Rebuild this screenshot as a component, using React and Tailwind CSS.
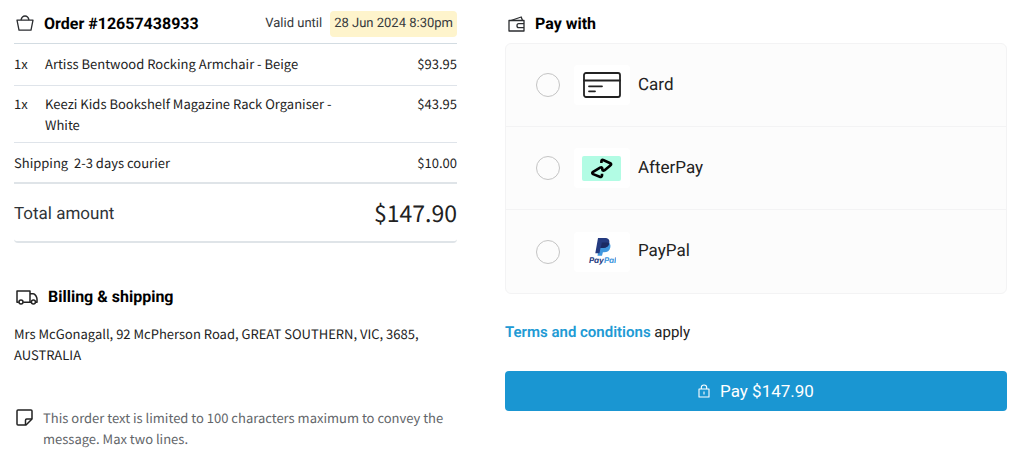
import React, { useState } from 'react';

const BasketIcon = () => (
    <svg width="18" height="17" viewBox="0 0 18 17" fill="none" stroke="#2b2d30" strokeWidth="1.3" strokeLinejoin="round" aria-hidden="true">
        <path d="M1 5.2h16l-2 9.9H3z" />
        <path d="M5 5C5.6 2.4 7 1 9 1s3.4 1.4 4 4" />
    </svg>
);

const WalletIcon = () => (
    <svg width="17" height="16" viewBox="0 0 17 16" fill="none" stroke="#2b2d30" strokeWidth="1.3" strokeLinejoin="round" aria-hidden="true">
        <path d="M1 4.5h15V15H1z" />
        <path d="M3 4.5L13.2 1l1.3 3.5" />
        <path d="M16 7.7h-5.2q-1.8 0-1.8 2t1.8 2H16" />
    </svg>
);

const TruckIcon = () => (
    <svg width="22" height="15" viewBox="0 0 22 15" fill="none" stroke="#222" strokeWidth="1.5" strokeLinejoin="round" aria-hidden="true">
        <path d="M2.8 12.2H1V1h13v11.2H7.2" />
        <path d="M14 3.7h3.2c2 0 3.8 3.7 3.8 5.3v3.2h-1.5M15.2 12.2H14" />
        <circle cx="5" cy="12" r="2" />
        <circle cx="17.4" cy="12" r="2" />
    </svg>
);

const NoteIcon = () => (
    <svg width="17" height="17" viewBox="0 0 17 17" fill="none" stroke="#222" strokeWidth="1.5" strokeLinejoin="round" aria-hidden="true">
        <path d="M2 1h13q1 0 1 1v8l-6 6H2q-1 0-1-1V2q0-1 1-1z" />
        <path d="M9.5 16v-4.8q0-1.2 1.2-1.2H16" />
    </svg>
);

const LockIcon = () => (
    <svg width="12" height="14" viewBox="0 0 12 14" fill="none" stroke="#fff" strokeWidth="1.1" strokeLinejoin="round" aria-hidden="true">
        <path d="M1 5h10v8H1zM3.3 5V3.5C3.3 2 4.4 1 6 1s2.7 1 2.7 2.5V5M6 7.5v3" />
    </svg>
);

const CardLogo = () => (
    <svg width="38" height="26" viewBox="0 0 38 26" fill="none" stroke="#222" strokeWidth="1.8" strokeLinecap="round" aria-hidden="true">
        <rect x="1" y="1" width="36" height="24" rx="2" />
        <path d="M1 8.5h36M6 14.3h13M6 19.3h6" />
    </svg>
);

const AfterPayLogo = () => (
    <svg width="39" height="25" viewBox="0 0 39 25" fill="none" aria-hidden="true">
        <rect width="39" height="25" rx="2" fill="#b2fce4" />
        <path
            d="M19.4 7V5.3q.3-2 2.3-1.1l6.6 3q1.7 1 0 2.200l-5.700 4.800q-1.900 1.200-2.300-.8v-.9q-.3-1.900-2.200-.8l-7 4.200q-1.700 1.200 0 2.200l6.600 2.600q1.900.8 2.300-1v-1.900"
            stroke="#000"
            strokeWidth="2.6"
            strokeLinejoin="round"
        />
    </svg>
);

const PayPalLogo = () => (
    <svg width="28" height="30" viewBox="0 0 28 30" aria-hidden="true">
        <path d="M11.5 5.5h7.2c3.3 0 4.2 2.3 3.6 5-.7 3.3-3 4.8-6.2 4.8h-1.2l-.9 3.4H9.5z" fill="#4097de" />
        <path d="M10 1h6.700c3.600 0 5.200 1.800 4.600 5-.6 3.500-3 5-6.200 5h-2.600l-1 5.200H7.300z" fill="#253b80" />
        <path d="M13.8 5.500h5c1 0 1.900.2 2.500.6-.5 3.400-2.900 4.900-6.200 4.900h-2.400z" fill="#1b2a63" />
        <text x="1" y="26" fontFamily="Inter, sans-serif" fontSize="8" fontWeight="700" fontStyle="italic" fill="#253b80">
            Pay<tspan fill="#4097de">Pal</tspan>
        </text>
    </svg>
);

const items = [
    { qty: 1, name: 'Artiss Bentwood Rocking Armchair - Beige', price: '$93.95' },
    { qty: 1, name: 'Keezi Kids Bookshelf Magazine Rack Organiser - White', price: '$43.95' },
];

const methods = [
    { id: 'card', label: 'Card', Logo: CardLogo },
    { id: 'afterpay', label: 'AfterPay', Logo: AfterPayLogo },
    { id: 'paypal', label: 'PayPal', Logo: PayPalLogo },
];

const OrderSummary = () => (
    <section>
        <div className="flex h-11 items-center border-b border-[#d3dce2] pt-1 pl-0.5">
            <BasketIcon />
            <h2 className="ml-2.5 font-['Roboto',sans-serif] text-base font-bold text-black">Order #12657438933</h2>
            <div className="ml-auto flex items-center gap-2 font-['Roboto',sans-serif] text-[13px] text-[#36393c]">
                <span>Valid until</span>
                <time className="rounded bg-[#fef4cc] px-1 py-0.5 leading-[22px]">28 Jun 2024 8:30pm</time>
            </div>
        </div>

        <table className="w-full">
            <tbody className="[&>tr:first-child>td]:pt-[9px]">
                {items.map((item) => (
                    <tr key={item.name} className="h-[41px] border-b border-[#dfe4ea] align-top">
                        <td className="w-[31px] py-[7px]">{item.qty}x</td>
                        <td className="py-[7px] pr-16">{item.name}</td>
                        <td className="py-[7px] text-right">{item.price}</td>
                    </tr>
                ))}
                <tr className="h-[41px] border-b-2 border-[#dfe4e8]">
                    <td colSpan={2}>Shipping&nbsp; 2-3 days courier</td>
                    <td className="text-right">$10.00</td>
                </tr>
            </tbody>
        </table>

        <div className="flex h-[59px] items-center justify-between rounded-b border-b-2 border-[#dfe4e8]">
            <span className="pt-1 font-['Roboto',sans-serif] text-[17px] text-[#2f3337]">Total amount</span>
            <span className="text-[23px]">$147.90</span>
        </div>
    </section>
);

const Shipping = () => (
    <section className="mt-10">
        <div className="flex h-7 items-center gap-2.5 pl-0.5">
            <TruckIcon />
            <h2 className="font-['Roboto',sans-serif] text-base font-bold text-black">Billing &amp; shipping</h2>
        </div>
        <address className="mt-3 not-italic">
            Mrs McGonagall, 92 McPherson Road, GREAT SOUTHERN, VIC, 3685, AUSTRALIA
        </address>
        <div className="mt-[42px] flex gap-2.5 text-[#626569]">
            <span className="shrink-0 pt-0.5 pl-0.5"><NoteIcon /></span>
            <p>This order text is limited to 100 characters maximum to convey the message. Max two lines.</p>
        </div>
    </section>
);

const Payment = () => {
    const [method, setMethod] = useState(null);

    return (
        <section className="font-['Roboto',sans-serif] text-[#222]">
            <div className="flex h-[43px] items-center gap-2.5 pt-1 pl-[3px]">
                <WalletIcon />
                <h2 className="text-base font-bold text-black">Pay with</h2>
            </div>

            <div className="divide-y divide-[#f3f3f4] rounded-md border border-[#f3f3f4] bg-[#fcfcfc]">
                {methods.map(({ id, label, Logo }) => (
                    <label key={id} htmlFor={id} className="flex h-[83px] cursor-pointer items-center pl-[30px] text-[17px]">
                        <input
                            type="radio"
                            id={id}
                            name="method"
                            checked={method === id}
                            onChange={() => setMethod(id)}
                            className="size-6 appearance-none rounded-full border border-[#c4c4c4] checked:border-8 checked:border-[#1a96d2]"
                        />
                        <span className="mr-2 ml-3.5 flex h-10 w-14 items-center justify-center rounded-sm bg-white">
                            <Logo />
                        </span>
                        {label}
                    </label>
                ))}
            </div>

            <p className="mt-[27px] text-[15px] leading-[22px]">
                <a href="#terms" className="font-semibold text-[#219ad4]">Terms and conditions</a> apply
            </p>

            <button type="button" className="mt-7 flex h-10 w-full items-center justify-center gap-2.5 rounded bg-[#1a96d2] text-[17px] text-white">
                <LockIcon />
                Pay $147.90
            </button>
        </section>
    );
};

const App = () => (
    <main className="grid grid-cols-[15fr_17fr] gap-12 bg-white pr-[17px] pl-3.5 font-['Noto_Sans_CJK_SC',sans-serif] text-[13px] leading-[21px] text-[#222] [text-rendering:geometricPrecision]">
        <div>
            <OrderSummary />
            <Shipping />
        </div>
        <Payment />
    </main>
);

export default App;
